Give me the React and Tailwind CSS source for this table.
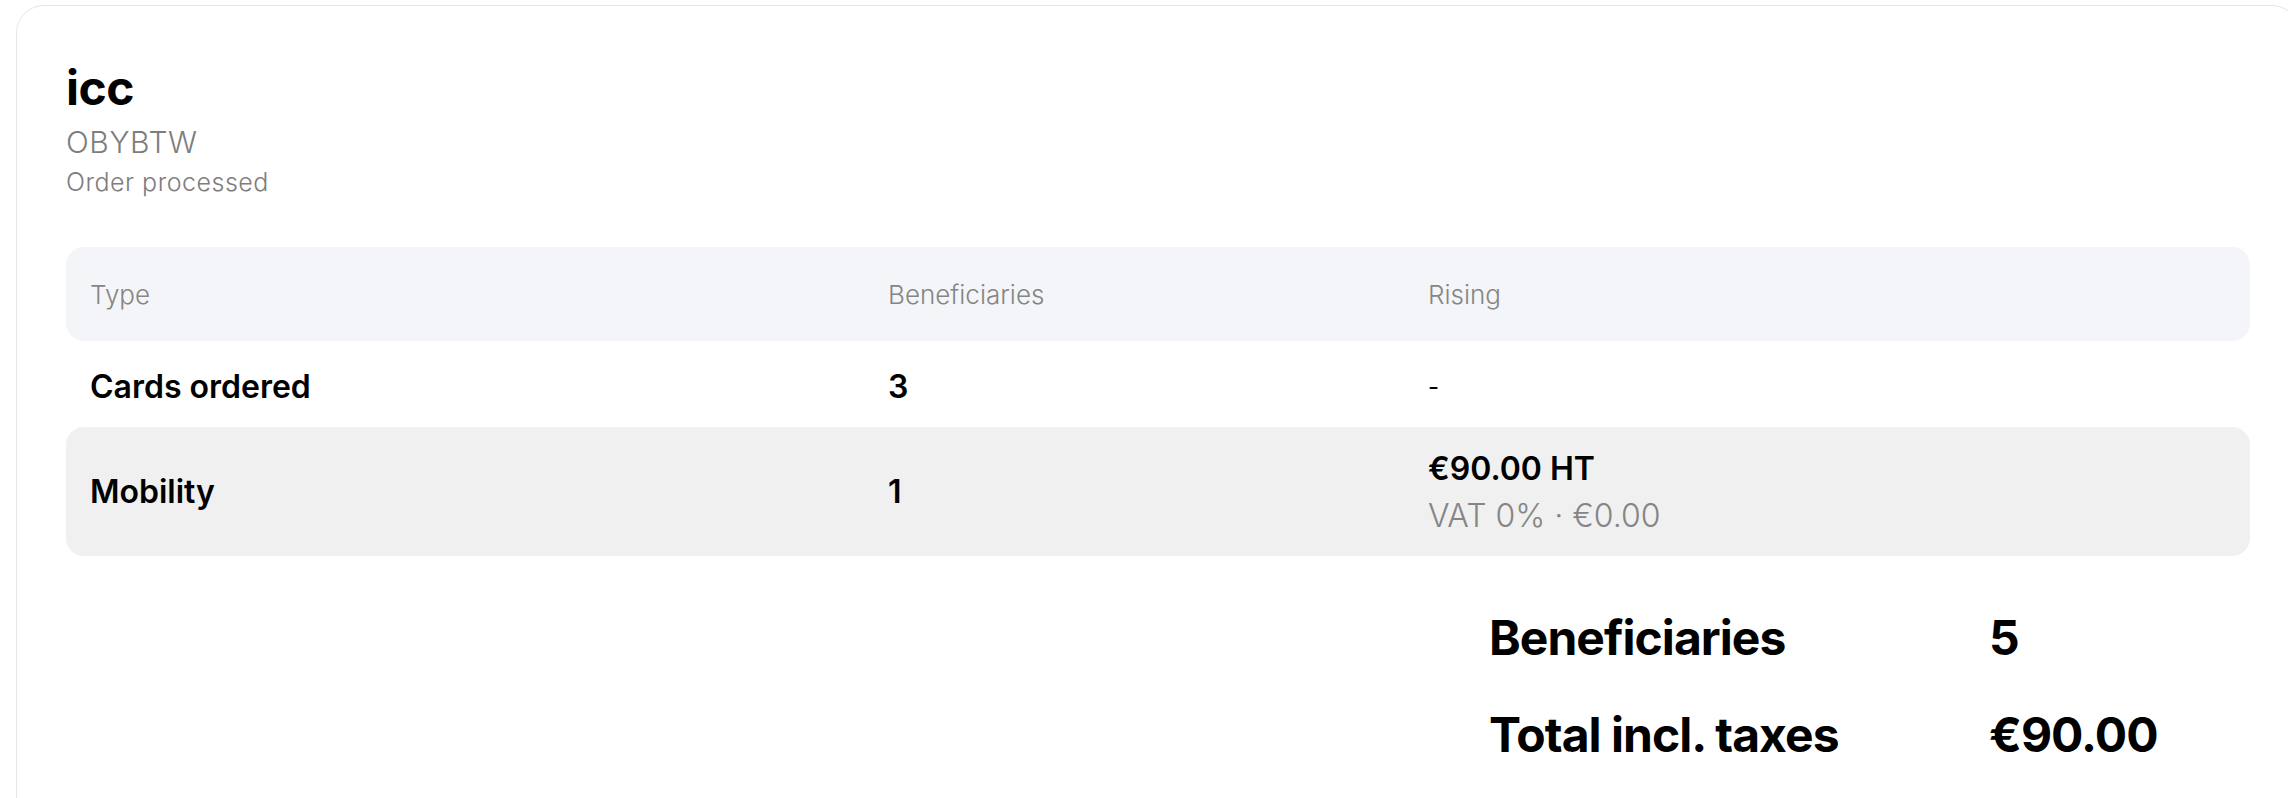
const rows = [
  { type: "Cards ordered", count: "3", rising: null, bg: "" },
  {
    type: "Mobility",
    count: "1",
    rising: { amount: "€90.00 HT", vat: "VAT 0% · €0.00" },
    bg: "bg-[#f0f0f0]",
  },
];

const OrderSummary = () => {
  return (
    <div className="rounded-[28px] border border-[#e6e6e6] bg-white px-[49px] pt-[52px] w-[2284px] min-h-[900px]">
      {/* Header */}
      <div className="mb-[48px]">
        <h1 className="text-[48px] leading-[60px] font-bold text-black tracking-[-0.01em]">icc</h1>
        <p className="text-[30px] leading-[40px] font-light text-[#7d7d7d] tracking-[0.02em] mt-[4px]">OBYBTW</p>
        <p className="text-[25px] leading-[34px] font-light text-[#7d7d7d] tracking-[0.02em] mt-[3px]">Order processed</p>
      </div>

      {/* Table */}
      <div className="grid grid-cols-[798px_540px_1fr] h-[94px] items-center rounded-[18px] bg-[#f4f5f9] px-[24px] text-[26px] font-light text-[#858585]">
        <span>Type</span>
        <span>Beneficiaries</span>
        <span>Rising</span>
      </div>

      {rows.map((r) => (
        <div
          key={r.type}
          className={`grid grid-cols-[798px_540px_1fr] items-center rounded-[18px] px-[24px] text-black ${r.bg} ${
            r.rising ? "h-[129px]" : "h-[86px] pt-[6px]"
          }`}
        >
          <span className="text-[32px] font-semibold">{r.type}</span>
          <span className="text-[32px] font-semibold">{r.count}</span>
          {r.rising ? (
            <div className="leading-[47px]">
              <p className="text-[32px] font-semibold">{r.rising.amount}</p>
              <p className="text-[32px] font-light text-[#858585]">{r.rising.vat}</p>
            </div>
          ) : (
            <span className="text-[24px]">-</span>
          )}
        </div>
      ))}

      {/* Totals */}
      <div className="flex justify-end mt-[46px] mr-[3px]">
        <div className="grid grid-cols-[500px_258px] gap-y-[25px] text-[48px] leading-[72px] font-bold text-black tracking-[-0.02em]">
          <span>Beneficiaries</span>
          <span>5</span>
          <span>Total incl. taxes</span>
          <span>€90.00</span>
        </div>
      </div>
    </div>
  );
};

export default function App() {
  return (
    <div className="w-screen h-[798px] overflow-hidden bg-white pl-[16px] pt-[5px]" style={{ fontFamily: "Inter, 'Noto Sans', sans-serif" }}>
      <OrderSummary />
    </div>
  );
}
